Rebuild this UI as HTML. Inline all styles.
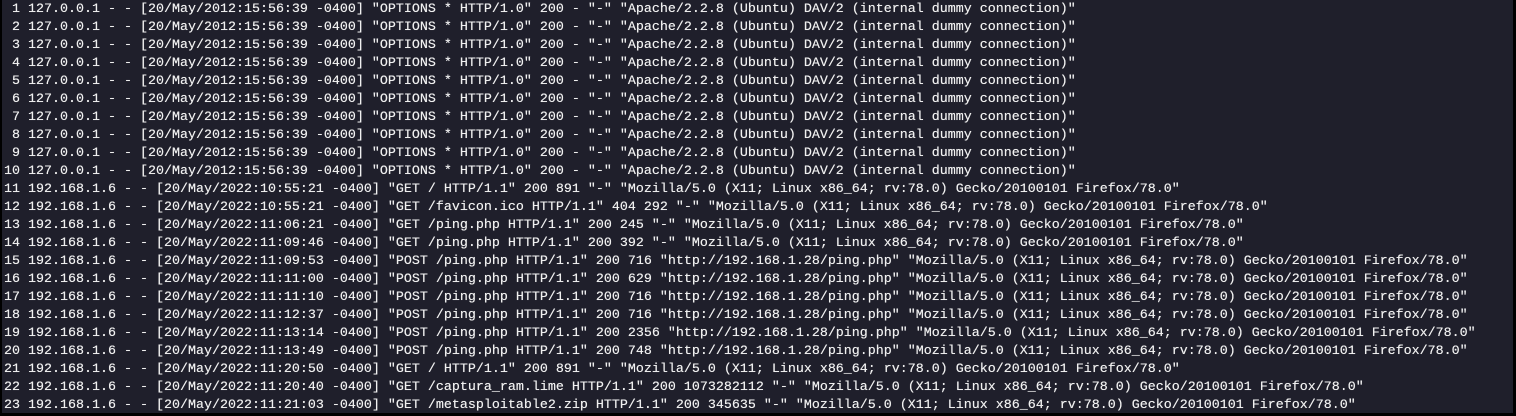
<!DOCTYPE html>
<html><head><meta charset="utf-8"><style>
html,body{margin:0;padding:0;background:#000;}
body{width:1516px;height:416px;overflow:hidden;position:relative;}
.t{position:absolute;left:2px;top:0;width:1511px;height:413px;background:#1f1f2b;}
pre{margin:0;padding:1px 0 0 2px;font-family:"Liberation Mono",monospace;font-size:13.33px;line-height:18px;color:#f0f0f0;white-space:pre;text-shadow:0 0 0.4px #f0f0f0;}
</style></head><body><div class="t"><pre> 1 127.0.0.1 - - [20/May/2012:15:56:39 -0400] "OPTIONS * HTTP/1.0" 200 - "-" "Apache/2.2.8 (Ubuntu) DAV/2 (internal dummy connection)"
 2 127.0.0.1 - - [20/May/2012:15:56:39 -0400] "OPTIONS * HTTP/1.0" 200 - "-" "Apache/2.2.8 (Ubuntu) DAV/2 (internal dummy connection)"
 3 127.0.0.1 - - [20/May/2012:15:56:39 -0400] "OPTIONS * HTTP/1.0" 200 - "-" "Apache/2.2.8 (Ubuntu) DAV/2 (internal dummy connection)"
 4 127.0.0.1 - - [20/May/2012:15:56:39 -0400] "OPTIONS * HTTP/1.0" 200 - "-" "Apache/2.2.8 (Ubuntu) DAV/2 (internal dummy connection)"
 5 127.0.0.1 - - [20/May/2012:15:56:39 -0400] "OPTIONS * HTTP/1.0" 200 - "-" "Apache/2.2.8 (Ubuntu) DAV/2 (internal dummy connection)"
 6 127.0.0.1 - - [20/May/2012:15:56:39 -0400] "OPTIONS * HTTP/1.0" 200 - "-" "Apache/2.2.8 (Ubuntu) DAV/2 (internal dummy connection)"
 7 127.0.0.1 - - [20/May/2012:15:56:39 -0400] "OPTIONS * HTTP/1.0" 200 - "-" "Apache/2.2.8 (Ubuntu) DAV/2 (internal dummy connection)"
 8 127.0.0.1 - - [20/May/2012:15:56:39 -0400] "OPTIONS * HTTP/1.0" 200 - "-" "Apache/2.2.8 (Ubuntu) DAV/2 (internal dummy connection)"
 9 127.0.0.1 - - [20/May/2012:15:56:39 -0400] "OPTIONS * HTTP/1.0" 200 - "-" "Apache/2.2.8 (Ubuntu) DAV/2 (internal dummy connection)"
10 127.0.0.1 - - [20/May/2012:15:56:39 -0400] "OPTIONS * HTTP/1.0" 200 - "-" "Apache/2.2.8 (Ubuntu) DAV/2 (internal dummy connection)"
11 192.168.1.6 - - [20/May/2022:10:55:21 -0400] "GET / HTTP/1.1" 200 891 "-" "Mozilla/5.0 (X11; Linux x86_64; rv:78.0) Gecko/20100101 Firefox/78.0"
12 192.168.1.6 - - [20/May/2022:10:55:21 -0400] "GET /favicon.ico HTTP/1.1" 404 292 "-" "Mozilla/5.0 (X11; Linux x86_64; rv:78.0) Gecko/20100101 Firefox/78.0"
13 192.168.1.6 - - [20/May/2022:11:06:21 -0400] "GET /ping.php HTTP/1.1" 200 245 "-" "Mozilla/5.0 (X11; Linux x86_64; rv:78.0) Gecko/20100101 Firefox/78.0"
14 192.168.1.6 - - [20/May/2022:11:09:46 -0400] "GET /ping.php HTTP/1.1" 200 392 "-" "Mozilla/5.0 (X11; Linux x86_64; rv:78.0) Gecko/20100101 Firefox/78.0"
15 192.168.1.6 - - [20/May/2022:11:09:53 -0400] "POST /ping.php HTTP/1.1" 200 716 "http://192.168.1.28/ping.php" "Mozilla/5.0 (X11; Linux x86_64; rv:78.0) Gecko/20100101 Firefox/78.0"
16 192.168.1.6 - - [20/May/2022:11:11:00 -0400] "POST /ping.php HTTP/1.1" 200 629 "http://192.168.1.28/ping.php" "Mozilla/5.0 (X11; Linux x86_64; rv:78.0) Gecko/20100101 Firefox/78.0"
17 192.168.1.6 - - [20/May/2022:11:11:10 -0400] "POST /ping.php HTTP/1.1" 200 716 "http://192.168.1.28/ping.php" "Mozilla/5.0 (X11; Linux x86_64; rv:78.0) Gecko/20100101 Firefox/78.0"
18 192.168.1.6 - - [20/May/2022:11:12:37 -0400] "POST /ping.php HTTP/1.1" 200 716 "http://192.168.1.28/ping.php" "Mozilla/5.0 (X11; Linux x86_64; rv:78.0) Gecko/20100101 Firefox/78.0"
19 192.168.1.6 - - [20/May/2022:11:13:14 -0400] "POST /ping.php HTTP/1.1" 200 2356 "http://192.168.1.28/ping.php" "Mozilla/5.0 (X11; Linux x86_64; rv:78.0) Gecko/20100101 Firefox/78.0"
20 192.168.1.6 - - [20/May/2022:11:13:49 -0400] "POST /ping.php HTTP/1.1" 200 748 "http://192.168.1.28/ping.php" "Mozilla/5.0 (X11; Linux x86_64; rv:78.0) Gecko/20100101 Firefox/78.0"
21 192.168.1.6 - - [20/May/2022:11:20:50 -0400] "GET / HTTP/1.1" 200 891 "-" "Mozilla/5.0 (X11; Linux x86_64; rv:78.0) Gecko/20100101 Firefox/78.0"
22 192.168.1.6 - - [20/May/2022:11:20:40 -0400] "GET /captura_ram.lime HTTP/1.1" 200 1073282112 "-" "Mozilla/5.0 (X11; Linux x86_64; rv:78.0) Gecko/20100101 Firefox/78.0"
23 192.168.1.6 - - [20/May/2022:11:21:03 -0400] "GET /metasploitable2.zip HTTP/1.1" 200 345635 "-" "Mozilla/5.0 (X11; Linux x86_64; rv:78.0) Gecko/20100101 Firefox/78.0"</pre></div></body></html>
